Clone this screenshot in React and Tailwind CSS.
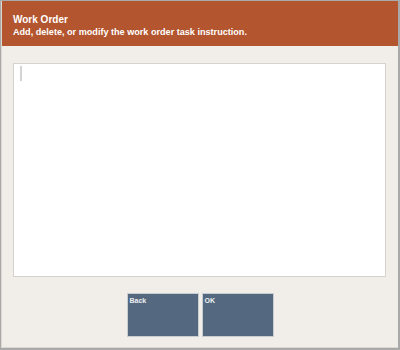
import React from "react";

const FONT = { fontFamily: '"Liberation Sans", Arial, sans-serif' };

function PadButton({ label }) {
  return (
    <button
      className="w-[72px] h-[44px] bg-[#546980] border border-[#c9cdd1] flex items-start px-[2px] pt-[2px] text-[7px] font-bold leading-[9px] text-[#eef0f2]"
      style={FONT}
    >
      {label}
    </button>
  );
}

export default function App() {
  return (
    <div
      className="w-[400px] h-[350px] bg-[#a9a9a9] pt-px pl-px pr-[2px] pb-[2px] flex"
      style={FONT}
    >
      <div className="flex-1 flex flex-col bg-[#f1eee9] border-l border-b border-[#dcd7d1]">
        {/* Header */}
        <div className="h-[45px] bg-[#b3552e] pl-[11px] pt-[13px] text-white font-bold">
          <div className="text-[10px] leading-[12px]">Work Order</div>
          <div className="text-[9.1px] leading-[12px]">Add, delete, or modify the work order task instruction.</div>
        </div>

        {/* Text area */}
        <div className="mt-[17px] ml-[11px] mr-[12px] h-[214px] bg-white border border-[#d6d3cf] pl-[6px] pt-[2px]">
          <div className="w-[2px] h-[15px] bg-[#d4d4d4]" />
        </div>

        {/* Buttons */}
        <div className="mt-[16px] flex justify-center gap-[3px]">
          <PadButton label="Back" />
          <PadButton label="OK" />
        </div>
      </div>
    </div>
  );
}
